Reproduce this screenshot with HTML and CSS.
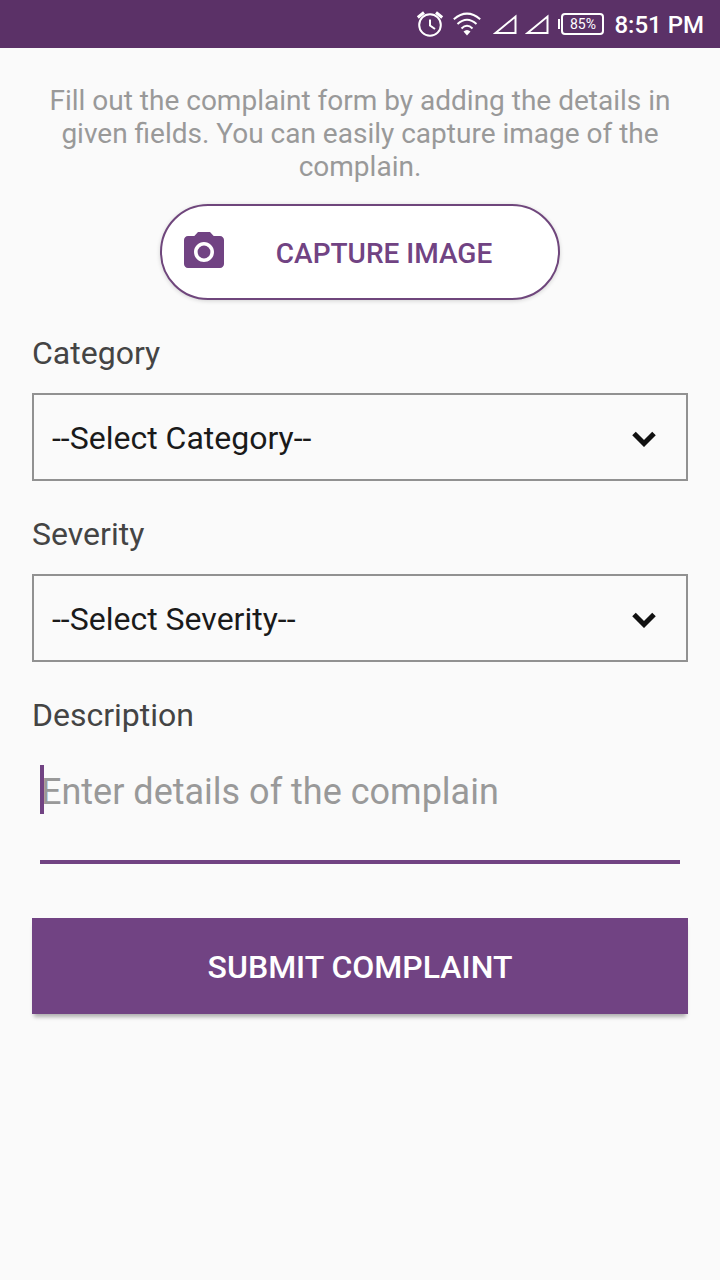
FILE: index.html
```html
<!DOCTYPE html>
<html lang="en">
<head>
  <meta charset="utf-8">
  <meta name="viewport" content="width=device-width, initial-scale=1">
  <title>Complaint form</title>
  <link rel="stylesheet" href="styles.css">
</head>
<body>
  <header class="status-bar">
    <svg class="alarm" width="28" height="28" viewBox="0 0 28 28" aria-hidden="true">
      <circle cx="14" cy="15" r="10.8"/>
      <path d="M14 9.500v6l5 3.500"/>
      <path class="bell" d="M1.800 7.500L8 2.500M20 2.500l6.200 5"/>
    </svg>
    <svg class="wifi" width="28" height="24" viewBox="0 0 28 24" aria-hidden="true">
      <path d="M.8 7.200Q14-4 27.200 7.200M4.500 12Q14 3.500 23.500 12M8.500 16.500Q14 11 19.500 16.500"/>
      <path class="dot" d="M10.500 19.500Q14 16.500 17.500 19.500L14 23.500z"/>
    </svg>
    <svg class="signal" width="24" height="20" viewBox="0 0 24 20" aria-hidden="true"><path d="M2.500 19L22.500 2.500v16.500z"/></svg>
    <svg class="signal" width="24" height="20" viewBox="0 0 24 20" aria-hidden="true"><path d="M2.500 19L22.500 2.500v16.500z"/></svg>
    <span class="battery"><span class="battery-level">85%</span></span>
    <time class="clock">8:51 PM</time>
  </header>

  <main>
    <form class="complaint">
      <p class="intro">Fill out the complaint form by adding the details in given fields. You can easily capture image of the complain.</p>

      <button class="capture" type="button">
        <svg width="48" height="48" viewBox="0 0 24 24" aria-hidden="true">
          <path d="M9 2L7.170 4H4c-1.100 0-2 .9-2 2v12c0 1.100.9 2 2 2h16c1.100 0 2-.9 2-2V6c0-1.100-.9-2-2-2h-3.170L15 2H9zm3 15c-2.760 0-5-2.240-5-5s2.240-5 5-5 5 2.240 5 5-2.240 5-5 5z"/>
          <circle cx="12" cy="12" r="3.200"/>
        </svg>
        <span class="capture-label">CAPTURE IMAGE</span>
      </button>

      <div class="field">
        <label for="category">Category</label>
        <div class="select-box">
          <select id="category"><option>--Select Category--</option></select>
          <svg class="chevron" width="28" height="20" viewBox="0 0 28 20" aria-hidden="true"><path d="M4 6.500L14 16.500l10-10"/></svg>
        </div>
      </div>

      <div class="field">
        <label for="severity">Severity</label>
        <div class="select-box">
          <select id="severity"><option>--Select Severity--</option></select>
          <svg class="chevron" width="28" height="20" viewBox="0 0 28 20" aria-hidden="true"><path d="M4 6.500L14 16.500l10-10"/></svg>
        </div>
      </div>

      <div class="field">
        <label for="description">Description</label>
        <div class="details">
          <span class="caret"></span>
          <textarea id="description" rows="2" placeholder="Enter details of the complain"></textarea>
        </div>
      </div>

      <button class="submit" type="submit">SUBMIT COMPLAINT</button>
    </form>
  </main>
</body>
</html>
```
FILE: styles.css
```css
* {
  box-sizing: border-box;
}

body {
  margin: 0;
  background: #fafafa;
  color: #444;
  font-family: Roboto, "Liberation Sans", sans-serif;
}

button,
select,
textarea {
  font-family: inherit;
}

.status-bar {
  display: flex;
  align-items: center;
  justify-content: flex-end;
  height: 48px;
  padding: 0 16px;
  background: #5b3167;
  color: #fff;
}

.status-bar svg {
  fill: none;
  stroke: #fff;
  stroke-width: 2;
}

.status-bar .bell {
  stroke-width: 3;
}

.status-bar .dot {
  fill: #fff;
  stroke: none;
}

.wifi {
  margin: 0 12px 0 9px;
}

.signal {
  margin-right: 8px;
}

.signal + .signal {
  margin-right: 9px;
}

.battery {
  display: flex;
  align-items: center;
  margin-right: 10px;
}

.battery::before {
  content: "";
  width: 2px;
  height: 10px;
  margin-right: 1px;
  background: #fff;
}

.battery-level {
  width: 43px;
  border: 2px solid #fff;
  border-radius: 4px;
  font-size: 14px;
  line-height: 18px;
  text-align: center;
}

.clock {
  padding-top: 2px;
  font-size: 24px;
  font-weight: 500;
  line-height: 28px;
}

.complaint {
  display: flex;
  flex-direction: column;
  padding: 36px 32px;
}

.intro {
  margin: 0 0 21px;
  color: #999;
  font-size: 28px;
  line-height: 33px;
  text-align: center;
}

.capture {
  display: flex;
  align-items: center;
  align-self: center;
  width: 400px;
  max-width: 100%;
  height: 96px;
  margin-bottom: 34px;
  padding: 0 18px;
  border: 2px solid #6f467c;
  border-radius: 50px;
  background: #fff;
  color: #714383;
  font-size: 28px;
  font-weight: 500;
  box-shadow: 0 1px 4px rgba(0, 0, 0, 0.16);
}

.capture svg {
  fill: #714383;
}

.capture-label {
  flex: 1;
  padding-top: 2px;
  text-align: center;
}

.field {
  display: flex;
  flex-direction: column;
  margin-bottom: 34px;
}

.field label {
  margin-bottom: 21px;
  font-size: 32px;
  line-height: 38px;
}

.select-box {
  display: grid;
  align-items: center;
}

.select-box select,
.select-box .chevron {
  grid-area: 1 / 1;
}

.select-box select {
  appearance: none;
  width: 100%;
  height: 88px;
  padding: 2px 80px 0 18px;
  border: 2px solid #919191;
  border-radius: 0;
  background: transparent;
  color: #1a1a1a;
  font-size: 32px;
}

.chevron {
  justify-self: end;
  margin-right: 30px;
  fill: none;
  stroke: #111;
  stroke-width: 5;
  pointer-events: none;
}

.details {
  position: relative;
  margin: 10px 8px 20px;
}

.details textarea {
  display: block;
  width: 100%;
  height: 99px;
  padding: 5px 0 0 1px;
  border: 0;
  border-bottom: 4px solid #714383;
  outline: 0;
  background: transparent;
  color: #1a1a1a;
  font-size: 36px;
  line-height: 44px;
  resize: none;
}

.details textarea::placeholder {
  color: #999;
  opacity: 1;
}

.caret {
  position: absolute;
  top: 0;
  left: 0;
  width: 4px;
  height: 49px;
  background: #714383;
}

.submit {
  height: 96px;
  padding: 2px 16px 0;
  border: 0;
  background: #714383;
  color: #fff;
  font-size: 32px;
  font-weight: 500;
  box-shadow: 0 5px 4px -2px rgba(0, 0, 0, 0.3);
}
```
